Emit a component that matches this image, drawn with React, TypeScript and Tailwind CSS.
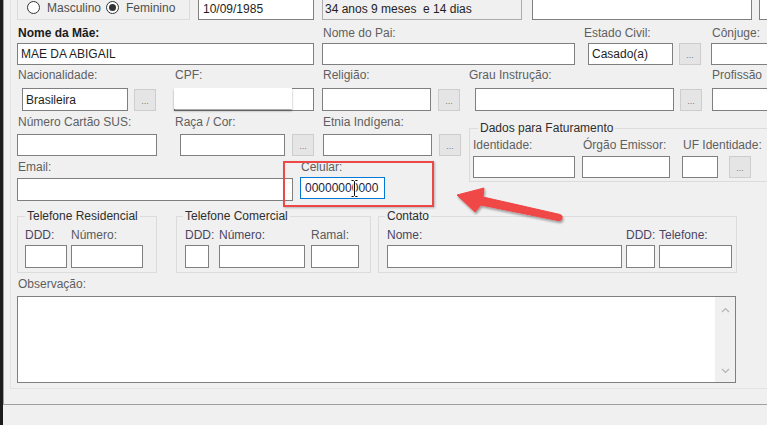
import React from 'react';

const lbl = 'block shrink-0 pl-[1px] leading-[15px] whitespace-nowrap text-[#5f5f5f]';
const grpLbl = 'block shrink-0 leading-[15px] whitespace-nowrap';

function Field({
  className = '',
  children,
}: {
  className?: string;
  children?: React.ReactNode;
}) {
  return (
    <div
      className={`relative shrink-0 flex items-center border border-[#7f7f7f] bg-white text-[#1e1e1e] whitespace-nowrap overflow-hidden ${className}`}
    >
      {children}
    </div>
  );
}

function Dots({ className = '' }: { className?: string }) {
  return (
    <div
      className={`shrink-0 w-[22px] h-[22px] flex items-end justify-center pb-[4px] border border-[#cdcdcd] bg-[#e5e5e5] text-[9px] leading-none text-[#7a7a7a] ${className}`}
    >
      ...
    </div>
  );
}

function Radio({ checked }: { checked?: boolean }) {
  return (
    <span className="shrink-0 w-[13px] h-[13px] rounded-full border border-[#333] bg-white flex items-center justify-center">
      {checked ? <span className="w-[7px] h-[7px] rounded-full bg-[#333]" /> : null}
    </span>
  );
}

export default function App() {
  return (
    <div className="relative flex w-[767px] h-[425px] overflow-hidden bg-[#f0f0f0] text-[12px] font-['Liberation_Sans',Arial,sans-serif]">
      <div className="w-[3px] shrink-0 bg-[#1c1c1c]" />
      <div className="flex-1 min-w-0">
        <div className="h-[405px] border-l border-b border-[#a0a0a0]">
          <div className="ml-[6px] h-[389px] border-l border-b border-[#e3e3e3] pl-[6px] overflow-hidden">
            <div className="w-[820px]">
              {/* sexo / nascimento / idade */}
              <div className="flex h-[23px] -mt-[3px]">
                <div className="shrink-0 w-[173px] h-[23px] border border-[#dcdcdc] flex items-center pb-[2px] text-[#4f4f4f]">
                  <span className="ml-[9px]">
                    <Radio />
                  </span>
                  <span className="ml-[7px]">Masculino</span>
                  <span className="ml-[5px]">
                    <Radio checked />
                  </span>
                  <span className="ml-[7px]">Feminino</span>
                </div>
                <Field className="ml-[8px] w-[116px] h-[23px] pl-[4px]">10/09/1985</Field>
                <Field className="ml-[8px] w-[200px] h-[23px] pl-[2px] !bg-[#f0f0f0] !border-[#adadad] whitespace-pre">
                  34 anos 9 meses  e 14 dias
                </Field>
                <Field className="ml-[10px] w-[220px] h-[23px]" />
                <Field className="ml-[7px] w-[40px] h-[23px]" />
              </div>

              {/* mae / pai / estado civil */}
              <div className="flex mt-[6px] h-[15px]">
                <span className={`${lbl} w-[305px] !text-[#1a1a1a] font-bold`}>Nome da Mãe:</span>
                <span className={`${lbl} w-[261px]`}>Nome do Pai:</span>
                <span className={`${lbl} w-[128px]`}>Estado Civil:</span>
                <span className={lbl}>Cônjuge:</span>
              </div>
              <div className="flex items-center mt-[2px] h-[22px]">
                <Field className="w-[297px] h-[22px] pl-[3px]">MAE DA ABIGAIL</Field>
                <Field className="ml-[8px] w-[253px] h-[22px]" />
                <Field className="ml-[13px] w-[85px] h-[22px] pl-[3px]">Casado(a)</Field>
                <Dots className="ml-[6px]" />
                <Field className="ml-[10px] w-[60px] h-[22px]" />
              </div>

              {/* nacionalidade / cpf / religiao */}
              <div className="flex mt-[3px] h-[15px]">
                <span className={`${lbl} w-[157px]`}>Nacionalidade:</span>
                <span className={`${lbl} w-[148px]`}>CPF:</span>
                <span className={`${lbl} w-[146px]`}>Religião:</span>
                <span className={`${lbl} w-[243px]`}>Grau Instrução:</span>
                <span className={lbl}>Profissão</span>
              </div>
              <div className="flex items-center mt-[5px] h-[23px]">
                <Field className="ml-[5px] w-[106px] h-[23px] pl-[3px]">Brasileira</Field>
                <Dots className="ml-[6px]" />
                <Field className="ml-[18px] w-[140px] h-[23px] !overflow-visible">
                  <div className="absolute -left-[1px] -top-[1px] w-[118px] h-[21px] bg-white shadow-[0_2px_2px_rgba(0,0,0,0.35)]" />
                </Field>
                <Field className="ml-[8px] w-[109px] h-[23px]" />
                <Dots className="ml-[7px]" />
                <Field className="ml-[15px] w-[199px] h-[23px]" />
                <Dots className="ml-[6px]" />
                <Field className="ml-[10px] w-[60px] h-[23px]" />
              </div>

              {/* sus / raça / etnia + faturamento */}
              <div className="flex items-start">
                <div className="shrink-0 w-[442px]">
                  <div className="flex mt-[4px] h-[15px]">
                    <span className={`${lbl} w-[157px]`}>Número Cartão SUS:</span>
                    <span className={`${lbl} w-[148px]`}>Raça / Cor:</span>
                    <span className={lbl}>Etnia Indígena:</span>
                  </div>
                  <div className="flex items-center mt-[4px] h-[22px]">
                    <Field className="w-[140px] h-[22px]" />
                    <Field className="ml-[23px] w-[105px] h-[22px]" />
                    <Dots className="ml-[7px]" />
                    <Field className="ml-[9px] w-[109px] h-[22px]" />
                    <Dots className="ml-[7px]" />
                  </div>
                  <div className="flex mt-[4px] h-[15px]">
                    <span className={`${lbl} w-[283px]`}>Email:</span>
                    <span className={lbl}>Celular:</span>
                  </div>
                  <div className="flex items-start mt-[2px] h-[24px]">
                    <Field className="mt-[1px] w-[276px] h-[23px]" />
                    <Field className="ml-[7px] w-[85px] h-[22px] pl-[4px] !border-[#0078d7] !text-[#1d1d40] !overflow-visible">
                      00000000000
                      <svg
                        className="absolute left-[49px] top-[1px]"
                        width="9"
                        height="19"
                        viewBox="0 0 9 19"
                      >
                        <path
                          d="M1.5 1.5h2l1 1 1-1h2M4.5 2.5v14M1.5 17.5h2l1-1 1 1h2"
                          fill="none"
                          stroke="#fff"
                          strokeWidth="2.5"
                        />
                        <path
                          d="M1.5 1.5h2l1 1 1-1h2M4.5 2.5v14M1.5 17.5h2l1-1 1 1h2"
                          fill="none"
                          stroke="#111"
                          strokeWidth="1"
                        />
                      </svg>
                    </Field>
                  </div>
                </div>

                <fieldset className="shrink-0 ml-[10px] mt-[10px] w-[330px] border border-[#dcdcdc] pl-[3px] pb-[3px]">
                  <legend className="ml-[5px] px-[2px] leading-[15px] text-[#2e2e2e]">
                    Dados para Faturamento
                  </legend>
                  <div className="flex mt-[2px] h-[15px]">
                    <span className={`${grpLbl} w-[110px] text-[#5f5f5f]`}>Identidade:</span>
                    <span className={`${grpLbl} w-[100px] text-[#5f5f5f]`}>Órgão Emissor:</span>
                    <span className={`${grpLbl} text-[#5f5f5f]`}>UF Identidade:</span>
                  </div>
                  <div className="flex items-center mt-[3px] h-[22px]">
                    <Field className="w-[102px] h-[22px]" />
                    <Field className="ml-[7px] w-[88px] h-[22px]" />
                    <Field className="ml-[12px] w-[36px] h-[22px]" />
                    <Dots className="ml-[11px]" />
                  </div>
                </fieldset>
              </div>

              {/* telefones / contato */}
              <div className="flex items-start mt-[8px]">
                <fieldset className="shrink-0 w-[140px] border border-[#dcdcdc] pl-[7px] pb-[4px]">
                  <legend className="px-[2px] leading-[15px] text-[#2e2e2e]">Telefone Residencial</legend>
                  <div className="flex mt-[4px] h-[15px]">
                    <span className={`${grpLbl} w-[46px] text-[#4a4563]`}>DDD:</span>
                    <span className={`${grpLbl} text-[#5a5a5a]`}>Número:</span>
                  </div>
                  <div className="flex mt-[2px] h-[23px]">
                    <Field className="w-[42px] h-[23px]" />
                    <Field className="ml-[4px] w-[72px] h-[23px]" />
                  </div>
                </fieldset>

                <fieldset className="shrink-0 ml-[19px] w-[195px] border border-[#dcdcdc] pl-[8px] pb-[4px]">
                  <legend className="-ml-[2px] px-[2px] leading-[15px] text-[#2e2e2e]">Telefone Comercial</legend>
                  <div className="flex mt-[4px] h-[15px]">
                    <span className={`${grpLbl} w-[34px] text-[#4a4563]`}>DDD:</span>
                    <span className={`${grpLbl} w-[92px] text-[#4a4563]`}>Número:</span>
                    <span className={`${grpLbl} text-[#5a5a5a]`}>Ramal:</span>
                  </div>
                  <div className="flex mt-[2px] h-[23px]">
                    <Field className="w-[24px] h-[23px]" />
                    <Field className="ml-[10px] w-[86px] h-[23px]" />
                    <Field className="ml-[6px] w-[48px] h-[23px]" />
                  </div>
                </fieldset>

                <fieldset className="shrink-0 ml-[7px] w-[359px] border border-[#dcdcdc] pl-[8px] pb-[4px]">
                  <legend className="-ml-[2px] px-[2px] leading-[15px] text-[#2e2e2e]">Contato</legend>
                  <div className="flex mt-[4px] h-[15px]">
                    <span className={`${grpLbl} w-[239px] text-[#4a4563]`}>Nome:</span>
                    <span className={`${grpLbl} w-[33px] text-[#4a4563]`}>DDD:</span>
                    <span className={`${grpLbl} text-[#4a4563]`}>Telefone:</span>
                  </div>
                  <div className="flex mt-[2px] h-[23px]">
                    <Field className="w-[235px] h-[23px]" />
                    <Field className="ml-[4px] w-[29px] h-[23px]" />
                    <Field className="ml-[4px] w-[73px] h-[23px]" />
                  </div>
                </fieldset>
              </div>

              {/* observacao */}
              <div className="mt-[4px] h-[15px]">
                <span className={lbl}>Observação:</span>
              </div>
              <div className="flex mt-[4px] w-[719px] h-[87px] border border-[#7f7f7f] bg-white">
                <div className="flex-1" />
                <div className="w-[20px] bg-[#f0f0f0] flex flex-col items-center justify-between pt-[10px] pb-[8px]">
                  <svg width="9" height="6" viewBox="0 0 9 6">
                    <path d="M1 5l3.5-3.5L8 5" fill="none" stroke="#b4b4b4" strokeWidth="1.2" />
                  </svg>
                  <svg width="9" height="6" viewBox="0 0 9 6">
                    <path d="M1 1l3.5 3.5L8 1" fill="none" stroke="#b4b4b4" strokeWidth="1.2" />
                  </svg>
                </div>
              </div>
            </div>
          </div>
        </div>
      </div>

      {/* annotation */}
      <div className="absolute left-[283px] top-[161px] w-[151px] h-[46px] border-2 border-[#ec4848] shadow-[1px_1px_2px_rgba(0,0,0,0.25)]" />
      <svg className="absolute left-[450px] top-[183px]" width="120" height="45" viewBox="0 0 120 45">
        <defs>
          <filter id="sh" x="-10%" y="-20%" width="130%" height="150%">
            <feDropShadow dx="1" dy="2" stdDeviation="1.2" floodColor="#000" floodOpacity="0.35" />
          </filter>
        </defs>
        <path
          d="M7 12 L34 5 L33 14 L110 31.5 A3 3 0 0 1 108 37.5 L31 22 L25 29 Z"
          fill="#f04646"
          stroke="#f04646"
          strokeWidth="1"
          strokeLinejoin="round"
          filter="url(#sh)"
        />
      </svg>
    </div>
  );
}
